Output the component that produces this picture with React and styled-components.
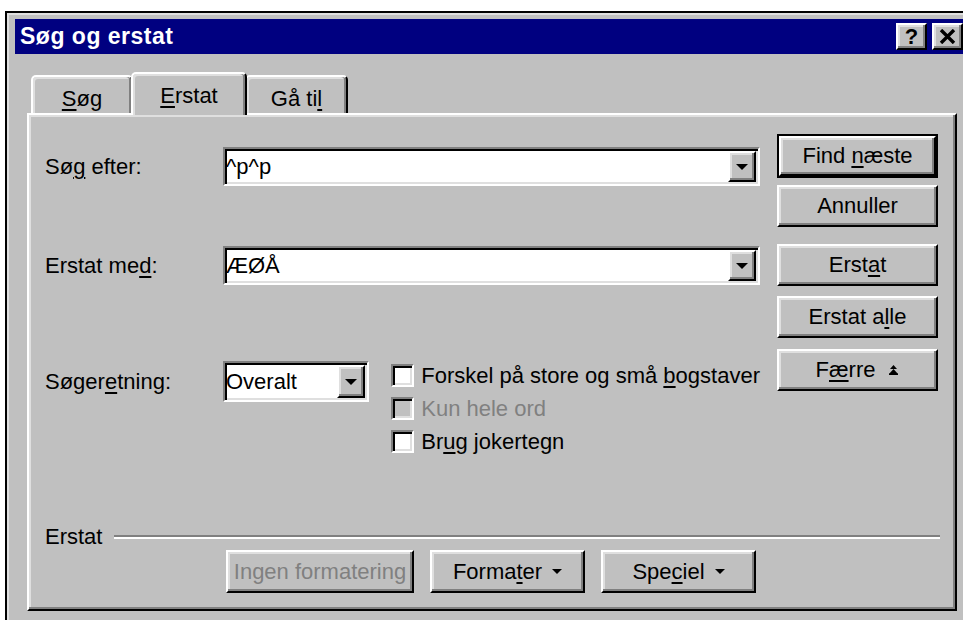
import React from 'react';
import styled, { createGlobalStyle, css } from 'styled-components';

const GlobalStyle = createGlobalStyle`
  html, body {
    margin: 0;
    padding: 0;
    background: #fff;
    overflow: hidden;
  }
  body {
    font-family: "Liberation Sans", Arial, sans-serif;
    font-size: 22px;
    color: #000;
  }
  #root {
    width: 963px;
    height: 620px;
    overflow: hidden;
  }
`;

// classic 3D bevels
const raised = css`
  border: 2px solid;
  border-color: #fff #000 #000 #fff;
  box-shadow: inset -2px -2px 0 #808080, inset 2px 2px 0 #dfdfdf;
`;

const sunken = css`
  border: 2px solid;
  border-color: #808080 #fff #fff #808080;
  box-shadow: inset 2px 2px 0 #000, inset -2px -2px 0 #dfdfdf;
`;

const Window = styled.div`
  box-sizing: border-box;
  margin: 11px 0 0 5px;
  width: 972px;
  height: 640px;
  padding: 6px 8px 0 8px;
  background: #c0c0c0;
  border: 2px solid #000;
  box-shadow: inset 2px 2px 0 #dfdfdf;
`;

const TitleBar = styled.div`
  height: 35px;
  display: flex;
  align-items: center;
  justify-content: space-between;
  padding: 0 4px 0 5px;
  background: #000080;
`;

const Title = styled.span`
  color: #fff;
  font-weight: bold;
  font-size: 23px;
  letter-spacing: 0.5px;
`;

const CaptionButtons = styled.div`
  display: flex;
  gap: 5px;
`;

const CaptionButton = styled.div`
  ${raised}
  box-sizing: border-box;
  width: 31px;
  height: 27px;
  display: flex;
  align-items: center;
  justify-content: center;
  background: #c0c0c0;
  font-weight: bold;
  font-size: 22px;
  line-height: 1;
`;

const Body = styled.div`
  padding: 18px 0 0 12px;
`;

const TabStrip = styled.div`
  display: flex;
  align-items: flex-end;
  height: 41px;
  padding-left: 4px;
`;

const Tab = styled.div`
  position: relative;
  box-sizing: border-box;
  width: ${p => p.$w}px;
  height: ${p => (p.$active ? 43 : 38)}px;
  margin: 0 ${p => (p.$active ? -2 : 0)}px ${p => (p.$active ? -2 : 0)}px;
  z-index: ${p => (p.$active ? 2 : 0)};
  padding-top: ${p => (p.$active ? 3 : 7)}px;
  display: flex;
  align-items: center;
  justify-content: center;
  background: #c0c0c0;
  border: 2px solid;
  border-bottom: none;
  border-color: #fff #000 transparent #fff;
  border-radius: 5px 5px 0 0;
  box-shadow: inset -2px 0 0 #808080, inset 2px 2px 0 #dfdfdf;
`;

const Panel = styled.div`
  position: relative;
  z-index: 1;
  box-sizing: border-box;
  width: 930px;
  height: 498px;
  display: flex;
  flex-direction: column;
  padding: 0 17px 16px 16px;
  background: #c0c0c0;
  border: 2px solid;
  border-color: #fff #000 #000 #fff;
  box-shadow: inset -2px -2px 0 #808080, inset 2px 2px 0 #dfdfdf;
`;

const MainArea = styled.div`
  display: flex;
  gap: 17px;
  align-items: flex-start;
`;

const FormColumn = styled.div`
  width: 715px;
  padding-top: 32px;
  display: flex;
  flex-direction: column;
`;

const FieldRow = styled.div`
  display: flex;
  align-items: flex-start;
  margin-top: ${p => p.$top || 0}px;
`;

const FieldLabel = styled.label`
  width: 178px;
  flex: none;
  height: ${p => p.$h || 39}px;
  line-height: ${p => p.$h || 39}px;
  white-space: nowrap;
`;

const Combo = styled.div`
  ${sunken}
  box-sizing: border-box;
  display: flex;
  width: ${p => p.$w}px;
  height: ${p => p.$h || 39}px;
  padding: 2px;
  background: #fff;
`;

const ComboText = styled.div`
  flex: 1;
  display: flex;
  align-items: center;
  margin-left: -1px;
  white-space: nowrap;
`;

const DropButton = styled.div`
  ${raised}
  box-sizing: border-box;
  width: 28px;
  display: flex;
  align-items: center;
  justify-content: center;
  background: #c0c0c0;
`;

const Checks = styled.div`
  margin: -2px 0 0 22px;
  display: flex;
  flex-direction: column;
`;

const CheckRow = styled.div`
  display: flex;
  align-items: center;
  gap: 7px;
  height: 33px;
  white-space: nowrap;
  color: ${p => (p.$disabled ? '#808080' : '#000')};
`;

const Box = styled.span`
  ${sunken}
  box-sizing: border-box;
  width: 23px;
  height: 23px;
  flex: none;
  background: ${p => (p.$disabled ? '#c0c0c0' : '#fff')};
`;

const ButtonColumn = styled.div`
  width: 161px;
  padding-top: 19px;
  display: flex;
  flex-direction: column;
`;

const DefaultFrame = styled.div`
  border: 2px solid #000;
`;

const Button = styled.div`
  ${raised}
  box-sizing: border-box;
  width: ${p => p.$w || 161}px;
  height: ${p => p.$h || 42}px;
  margin-top: ${p => p.$top || 0}px;
  display: flex;
  align-items: center;
  justify-content: center;
  gap: ${p => p.$gap || 10}px;
  background: #c0c0c0;
  white-space: nowrap;
  color: ${p => (p.$disabled ? '#808080' : '#000')};
`;

const FormatSection = styled.div`
  margin-top: auto;
`;

const GroupHeader = styled.div`
  display: flex;
  align-items: center;
  gap: 12px;
  height: 24px;
`;

const GroupRule = styled.div`
  flex: 1;
  margin-right: -2px;
  border-top: 2px solid #808080;
  border-bottom: 2px solid #fff;
`;

const FormatButtons = styled.div`
  display: flex;
  gap: 16px;
  margin-top: 1px;
  padding-left: 181px;
`;

const Key = styled.span`
  text-decoration: underline;
  text-decoration-thickness: 2px;
  text-underline-offset: 3px;
`;

const Arrow = () => (
  <svg width="12" height="6" viewBox="0 0 12 6">
    <path d="M0 0 H12 L6 6 Z" fill="#000" />
  </svg>
);

const SmallArrow = () => (
  <svg width="10" height="5" viewBox="0 0 10 5">
    <path d="M0 0 H10 L5 5 Z" fill="#000" />
  </svg>
);

// stacked double chevron on the "Færre" button
const LessIcon = () => (
  <svg width="11" height="10" viewBox="0 0 11 10">
    <path d="M5.5 0 L9 4 H2 Z M5.5 4 L10 9 H1 Z" fill="#000" />
    <rect x="1" y="8.5" width="9" height="1.5" fill="#000" />
  </svg>
);

const CloseGlyph = () => (
  <svg width="17" height="15" viewBox="0 0 17 15">
    <path d="M2 1 L15 14 M15 1 L2 14" stroke="#000" strokeWidth="3.4" />
  </svg>
);

export default function App() {
  return (
    <>
      <GlobalStyle />
      <Window>
        <TitleBar>
          <Title>Søg og erstat</Title>
          <CaptionButtons>
            <CaptionButton>?</CaptionButton>
            <CaptionButton><CloseGlyph /></CaptionButton>
          </CaptionButtons>
        </TitleBar>

        <Body>
          <TabStrip>
            <Tab $w={102}><span><Key>S</Key>øg</span></Tab>
            <Tab $w={116} $active><span><Key>E</Key>rstat</span></Tab>
            <Tab $w={103}><span>Gå ti<Key>l</Key></span></Tab>
          </TabStrip>

          <Panel>
            <MainArea>
              <FormColumn>
                <FieldRow>
                  <FieldLabel>Sø<Key>g</Key> efter:</FieldLabel>
                  <Combo $w={537}>
                    <ComboText>^p^p</ComboText>
                    <DropButton><Arrow /></DropButton>
                  </Combo>
                </FieldRow>

                <FieldRow $top={60}>
                  <FieldLabel>Erstat me<Key>d</Key>:</FieldLabel>
                  <Combo $w={537}>
                    <ComboText>ÆØÅ</ComboText>
                    <DropButton><Arrow /></DropButton>
                  </Combo>
                </FieldRow>

                <FieldRow $top={76}>
                  <FieldLabel $h={41}>Søger<Key>e</Key>tning:</FieldLabel>
                  <Combo $w={147} $h={41}>
                    <ComboText>Overalt</ComboText>
                    <DropButton><Arrow /></DropButton>
                  </Combo>
                  <Checks>
                    <CheckRow>
                      <Box />
                      <span>Forskel på store og små <Key>b</Key>ogstaver</span>
                    </CheckRow>
                    <CheckRow $disabled>
                      <Box $disabled />
                      <span>Kun hele ord</span>
                    </CheckRow>
                    <CheckRow>
                      <Box />
                      <span>Br<Key>u</Key>g jokertegn</span>
                    </CheckRow>
                  </Checks>
                </FieldRow>
              </FormColumn>

              <ButtonColumn>
                <DefaultFrame>
                  <Button $w={157} $h={40}><span>Find <Key>n</Key>æste</span></Button>
                </DefaultFrame>
                <Button $top={7}><span>Annuller</span></Button>
                <Button $top={17}><span>Erst<Key>a</Key>t</span></Button>
                <Button $top={10}><span>Erstat a<Key>l</Key>le</span></Button>
                <Button $top={11} $gap={13}>
                  <span>F<Key>æ</Key>rre</span>
                  <LessIcon />
                </Button>
              </ButtonColumn>
            </MainArea>

            <FormatSection>
              <GroupHeader>
                <span>Erstat</span>
                <GroupRule />
              </GroupHeader>
              <FormatButtons>
                <Button $w={188} $h={43} $disabled><span>Ingen formatering</span></Button>
                <Button $w={155} $h={43}>
                  <span>Forma<Key>t</Key>er</span>
                  <SmallArrow />
                </Button>
                <Button $w={155} $h={43}>
                  <span>Spe<Key>c</Key>iel</span>
                  <SmallArrow />
                </Button>
              </FormatButtons>
            </FormatSection>
          </Panel>
        </Body>
      </Window>
    </>
  );
}
